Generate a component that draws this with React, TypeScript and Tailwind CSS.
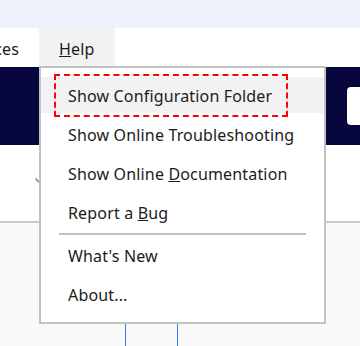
const ITEMS_TOP = [
  { label: 'Show Configuration Folder', key: null },
  { label: 'Show Online Troubleshooting', key: null },
  { label: 'Show Online Documentation', key: 'D' },
  { label: 'Report a Bug', key: 'B' },
];

const ITEMS_BOTTOM = [
  { label: "What's New", key: null },
  { label: 'About...', key: null },
];

function Label({ label, k }: { label: string; k: string | null }) {
  if (!k) return <span>{label}</span>;
  const i = label.lastIndexOf(k);
  return (
    <span>
      {label.slice(0, i)}
      <span className="underline decoration-1 underline-offset-[1px]">{label[i]}</span>
      {label.slice(i + 1)}
    </span>
  );
}

function MenuItem({ label, k, active }: { label: string; k: string | null; active?: boolean }) {
  return (
    <div
      className={`h-[36px] flex items-center pl-[27px] pt-[2px] whitespace-nowrap ${
        active ? 'bg-[#f2f2f2]' : ''
      }`}
    >
      <Label label={label} k={k} />
    </div>
  );
}

export default function App() {
  return (
    <div className="relative w-[360px] h-[346px] overflow-hidden bg-[#f9f9f9] flex flex-col text-[16px] tracking-[0.16px] text-[#1b1b1b] font-['Noto_Sans',sans-serif]">
      {/* title strip */}
      <div className="h-[28px] shrink-0 bg-[#eef1f9]" />

      {/* menu bar */}
      <div className="h-[39px] shrink-0 bg-white flex">
        <div className="w-[39px] overflow-hidden flex justify-end">
          <div className="pr-[20px] pt-[2px] whitespace-nowrap flex items-center">Preferences</div>
        </div>
        <div className="bg-[#f2f2f2] px-[20px] pt-[2px] flex items-center">
          <span>
            <span className="underline decoration-1 underline-offset-[1px]">H</span>elp
          </span>
        </div>
      </div>

      {/* navy header */}
      <div className="h-[78px] shrink-0 bg-[#07073d] flex justify-end pt-[20px]">
        <div className="w-[13px] h-[38px] rounded-l-[4px] bg-white" />
      </div>

      {/* toolbar row */}
      <div className="h-[78px] shrink-0 bg-white border-b-2 border-[#c9c9c9] pl-[34px] pt-[32px]">
        <svg width="10" height="7" viewBox="0 0 10 7" className="text-[#7a7a7a]">
          <path d="M1.5 1.5 L5 5 L8.5 1.5" fill="none" stroke="currentColor" strokeWidth="1.3" />
        </svg>
      </div>

      {/* content */}
      <div className="flex-1">
        <div className="ml-[125px] w-[53px] h-full border-x border-[#2f7bf5]" />
      </div>

      {/* Help dropdown */}
      <div className="absolute left-[39px] top-[66px] w-[287px] bg-white border-2 border-[#c2c2c2] pt-[9px] pb-[10px]">
        <div className="flex flex-col gap-[3px]">
          {ITEMS_TOP.map((it, i) => (
            <MenuItem key={it.label} label={it.label} k={it.key} active={i === 0} />
          ))}
        </div>
        <div className="mx-[18px] mt-[3px] mb-[2px] h-[2px] bg-[#c2c2c2]" />
        <div className="flex flex-col gap-[3px]">
          {ITEMS_BOTTOM.map((it) => (
            <MenuItem key={it.label} label={it.label} k={it.key} />
          ))}
        </div>

        {/* highlight annotation */}
        <div className="absolute left-[13px] top-[6px] w-[234px] h-[43px] border-2 border-dashed border-[#ff0000]" />
      </div>
    </div>
  );
}
